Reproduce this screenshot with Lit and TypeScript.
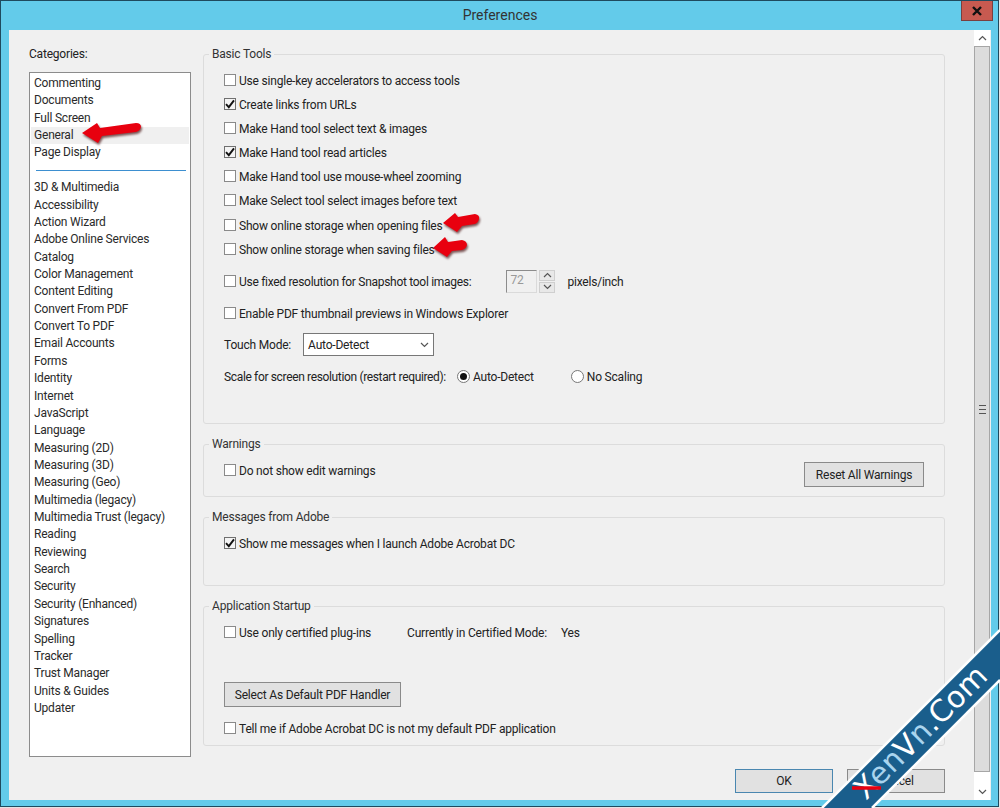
import { LitElement, html, css, svg } from "lit";
import { customElement } from "lit/decorators.js";

const TOP = ["Commenting", "Documents", "Full Screen", "General", "Page Display"];
const REST = ["3D & Multimedia", "Accessibility", "Action Wizard", "Adobe Online Services", "Catalog", "Color Management", "Content Editing", "Convert From PDF", "Convert To PDF", "Email Accounts", "Forms", "Identity", "Internet", "JavaScript", "Language", "Measuring (2D)", "Measuring (3D)", "Measuring (Geo)", "Multimedia (legacy)", "Multimedia Trust (legacy)", "Reading", "Reviewing", "Search", "Security", "Security (Enhanced)", "Signatures", "Spelling", "Tracker", "Trust Manager", "Units & Guides", "Updater"];

const chevron = (up: boolean) => html`<svg width="9" height="6" viewBox="0 0 9 6"><path d=${up ? "M1 5 L4.5 1.5 L8 5" : "M1 1 L4.5 4.5 L8 1"} fill="none" stroke="#555" stroke-width="1.2"/></svg>`;

@customElement("app-root")
export class AppRoot extends LitElement {
  static styles = css`
    :host { display: block; width: 1000px; height: 808px; position: relative; overflow: hidden; background: #e4e4e4; font-family: "Roboto", "Noto Sans", sans-serif; font-size: 12px; letter-spacing: -0.2px; color: #222; }
    .window { box-sizing: border-box; width: 999px; height: 807px; background: #63cbea; border: 1px solid #1f4a5e; display: flex; flex-direction: column; padding: 0 7px 6px 8px; }
    .titlebar { height: 29px; flex: none; display: grid; grid-template-columns: 1fr auto 1fr; align-items: start; }
    .title { grid-column: 2; font-size: 14px; letter-spacing: 0; line-height: 29px; color: #333; }
    .close { grid-column: 3; justify-self: end; width: 32px; height: 20px; margin-right: -2px; box-sizing: border-box; background: #c75a50; border: 1px solid #7a3f3f; border-top: none; display: flex; align-items: center; justify-content: center; }
    .body { flex: 1; background: #f0f0f0; display: flex; min-height: 0; }
    .left { width: 183px; flex: none; box-sizing: border-box; padding: 16px 0 0 20px; display: flex; flex-direction: column; }
    .cat-label { height: 26px; line-height: 17px; }
    .list { box-sizing: border-box; width: 162px; height: 685px; background: #fff; border: 1px solid #8c8c8c; padding: 2px 0 0 1px; }
    .item { height: 17.37px; line-height: 17.6px; padding-left: 3px; margin-right: 1px; white-space: nowrap; color: #2a2a2a; }
    .item.sel { background: #f0f0f0; }
    .sep { height: 1px; background: #3d8fd0; margin: 8.4px 4px 8px 5px; }
    .main { width: 742px; flex: none; margin-left: 11px; padding-top: 16px; display: flex; flex-direction: column; }
    fieldset { box-sizing: border-box; margin: 0 0 12px 0; padding: 6px 20px 0 20px; border: 1px solid #dcdcdc; border-radius: 3px; min-width: 0; }
    legend { margin-left: -15px; padding: 0 3px; line-height: 17px; height: 16px; color: #333; }
    .g-basic { height: 378px; }
    .g-warn { height: 61px; }
    .g-msg { height: 77px; }
    .g-start { height: 148px; margin-bottom: 0; }
    .row { box-sizing: border-box; height: 24px; padding-top: 1px; display: flex; align-items: center; white-space: nowrap; }
    .m1 { margin-top: 1px; }
    .m7 { margin-top: 7px; }
    .m8 { margin-top: 8px; }
    .tight-a { letter-spacing: -0.29px; }
    .tight-b { letter-spacing: -0.35px; }
    .box { box-sizing: border-box; width: 12px; height: 12px; flex: none; background: #fff; border: 1px solid #8a8a8a; margin: 0 3px 1px 0; display: flex; align-items: center; justify-content: center; }
    .box.on { border-color: #707070; background: #f4f4f4; }
    .spin-input { box-sizing: border-box; width: 31px; height: 23px; margin: 0 0 1px 35px; border: 1px solid #dadada; border-top-color: #8c8c8c; border-left-color: #8c8c8c; color: #999; padding-left: 3px; line-height: 19px; }
    .spin { margin: 0 0 1px 2px; width: 16px; height: 23px; display: flex; flex-direction: column; gap: 1px; }
    .spin div { flex: 1; box-sizing: border-box; background: #e8e8e8; border: 1px solid #cfcfcf; display: flex; align-items: center; justify-content: center; }
    .unit { margin-left: 12px; }
    .select { box-sizing: border-box; width: 131px; height: 23px; margin: 0 0 0 12px; background: #fff; border: 1px solid #777; display: flex; align-items: center; justify-content: space-between; padding: 0 4px; }
    .radio { box-sizing: border-box; width: 13px; height: 13px; border-radius: 50%; border: 1px solid #777; background: #fff; flex: none; margin: 0 3px 1px 0; display: flex; align-items: center; justify-content: center; }
    .radio i { display: block; width: 7px; height: 7px; border-radius: 50%; background: #111; }
    .r1 { margin-left: 11px; }
    .r2 { margin-left: 37px; }
    .warn-row { display: flex; justify-content: space-between; align-items: flex-start; }
    .btn { box-sizing: border-box; height: 25px; background: #e1e1e1; border: 1px solid #8a8a8a; display: flex; align-items: center; justify-content: center; flex: none; }
    .reset { width: 120px; margin-top: 4px; }
    .cert { margin-left: 36px; }
    .yes { margin-left: 14px; }
    .default { width: 177px; margin-top: 38px; }
    .m9 { margin-top: 9px; }
    .footer { flex: 1; display: flex; justify-content: flex-end; gap: 14px; padding-top: 23px; }
    .footer .btn { width: 98px; height: 24px; }
    .ok { border-color: #4a87b0; }
    .scroll { width: 16px; flex: none; margin-left: 29px; display: flex; flex-direction: column; background: #fff; }
    .sb { height: 16px; flex: none; background: #fff; display: flex; align-items: center; justify-content: center; }
    .thumb { flex: 1; box-sizing: border-box; background: #dcdcdc; border: 1px solid #a6a6a6; display: flex; align-items: center; justify-content: center; margin-bottom: 12px; }
    .grip { width: 7px; height: 7px; border-top: 1px solid #555; border-bottom: 1px solid #555; }
    .grip::after { content: ""; display: block; height: 1px; background: #555; margin-top: 3px; }
    .overlay { position: absolute; left: 0; top: 0; pointer-events: none; }
    .arrow { fill: #e8000f; filter: drop-shadow(1px 2px 1px rgba(60, 0, 0, 0.65)); }
    .wm { font-family: "DejaVu Sans", sans-serif; font-size: 30px; font-weight: 400; letter-spacing: 0; }
  `;

  private check(on = false) {
    return html`<span class="box ${on ? "on" : ""}">${on ? html`<svg width="10" height="10" viewBox="0 0 10 10"><path d="M1 5.2 L3.8 8.2 L9 1.4" fill="none" stroke="#111" stroke-width="1.9"/></svg>` : ""}</span>`;
  }

  private overlay() {
    return svg`
      <path class="arrow" d="M82 133 L97 123 L100 128 L136 123 Q141 123 141 127 Q140 131 136 132 L102 136 L98 143 Z"/>
      <path class="arrow" d="M443 223 L455 213 L458 217 L475 214 Q480 215 479 219 Q478 223 475 224 L462 226 L457 232 Z"/>
      <path class="arrow" d="M433 248 L445 237 L448 242 L462 240 Q467 241 467 245 Q466 249 462 250 L452 251 L447 257 Z"/>
      <polygon points="822,808 1000,630 1000,680 872,808" fill="#1a5e8c"/>
      <path d="M822 808 L1000 630" stroke="#fff" stroke-width="2.5"/>
      <path d="M872 808 L1000 680" stroke="#fff" stroke-width="2.5"/>
      <g transform="translate(866 801) rotate(-45)">
        <text class="wm" x="0" y="0"><tspan fill="#fff">X</tspan><tspan fill="#a9d4ee">en</tspan><tspan fill="#fff">V</tspan><tspan fill="#a9d4ee">n</tspan><tspan fill="#fff">.Com</tspan></text>
      </g>
      <path d="M852 788 L881 788" stroke="#e8000f" stroke-width="3.5"/>
    `;
  }

  render() {
    return html`
      <div class="window">
        <div class="titlebar">
          <div class="title">Preferences</div>
          <div class="close"><svg width="10" height="10" viewBox="0 0 10 10"><path d="M1 1 L9 9 M9 1 L1 9" stroke="#111" stroke-width="2.4"/></svg></div>
        </div>
        <div class="body">
          <div class="left">
            <div class="cat-label">Categories:</div>
            <div class="list">
              ${TOP.map((t) => html`<div class="item ${t === "General" ? "sel" : ""}">${t}</div>`)}
              <div class="sep"></div>
              ${REST.map((t) => html`<div class="item">${t}</div>`)}
            </div>
          </div>
          <div class="main">
            <fieldset class="g-basic">
              <legend>Basic Tools</legend>
              <div class="row">${this.check()}Use single-key accelerators to access tools</div>
              <div class="row">${this.check(true)}Create links from URLs</div>
              <div class="row">${this.check()}Make Hand tool select text &amp; images</div>
              <div class="row">${this.check(true)}Make Hand tool read articles</div>
              <div class="row">${this.check()}Make Hand tool use mouse-wheel zooming</div>
              <div class="row">${this.check()}Make Select tool select images before text</div>
              <div class="row m1">${this.check()}Show online storage when opening files</div>
              <div class="row">${this.check()}Show online storage when saving files</div>
              <div class="row m8">${this.check()}<span class="tight-a">Use fixed resolution for Snapshot tool images:</span>
                <span class="spin-input">72</span>
                <span class="spin"><div>${chevron(true)}</div><div>${chevron(false)}</div></span>
                <span class="unit">pixels/inch</span>
              </div>
              <div class="row m8">${this.check()}Enable PDF thumbnail previews in Windows Explorer</div>
              <div class="row m7">Touch Mode:
                <span class="select">Auto-Detect ${chevron(false)}</span>
              </div>
              <div class="row m8"><span class="tight-b">Scale for screen resolution (restart required):</span>
                <span class="radio r1"><i></i></span>Auto-Detect
                <span class="radio r2"></span>No Scaling
              </div>
            </fieldset>
            <fieldset class="g-warn">
              <legend>Warnings</legend>
              <div class="warn-row">
                <div class="row">${this.check()}Do not show edit warnings</div>
                <div class="btn reset">Reset All Warnings</div>
              </div>
            </fieldset>
            <fieldset class="g-msg">
              <legend>Messages from Adobe</legend>
              <div class="row">${this.check(true)}Show me messages when I launch Adobe Acrobat DC</div>
            </fieldset>
            <fieldset class="g-start">
              <legend>Application Startup</legend>
              <div class="row">${this.check()}Use only certified plug-ins
                <span class="cert">Currently in Certified Mode:</span><span class="yes">Yes</span>
              </div>
              <div class="btn default">Select As Default PDF Handler</div>
              <div class="row m9">${this.check()}Tell me if Adobe Acrobat DC is not my default PDF application</div>
            </fieldset>
            <div class="footer">
              <div class="btn ok">OK</div>
              <div class="btn">Cancel</div>
            </div>
          </div>
          <div class="scroll">
            <div class="sb">${chevron(true)}</div>
            <div class="thumb"><div class="grip"></div></div>
            <div class="sb">${chevron(false)}</div>
          </div>
        </div>
      </div>
      <svg class="overlay" width="1000" height="808" viewBox="0 0 1000 808">${this.overlay()}</svg>
    `;
  }
}
